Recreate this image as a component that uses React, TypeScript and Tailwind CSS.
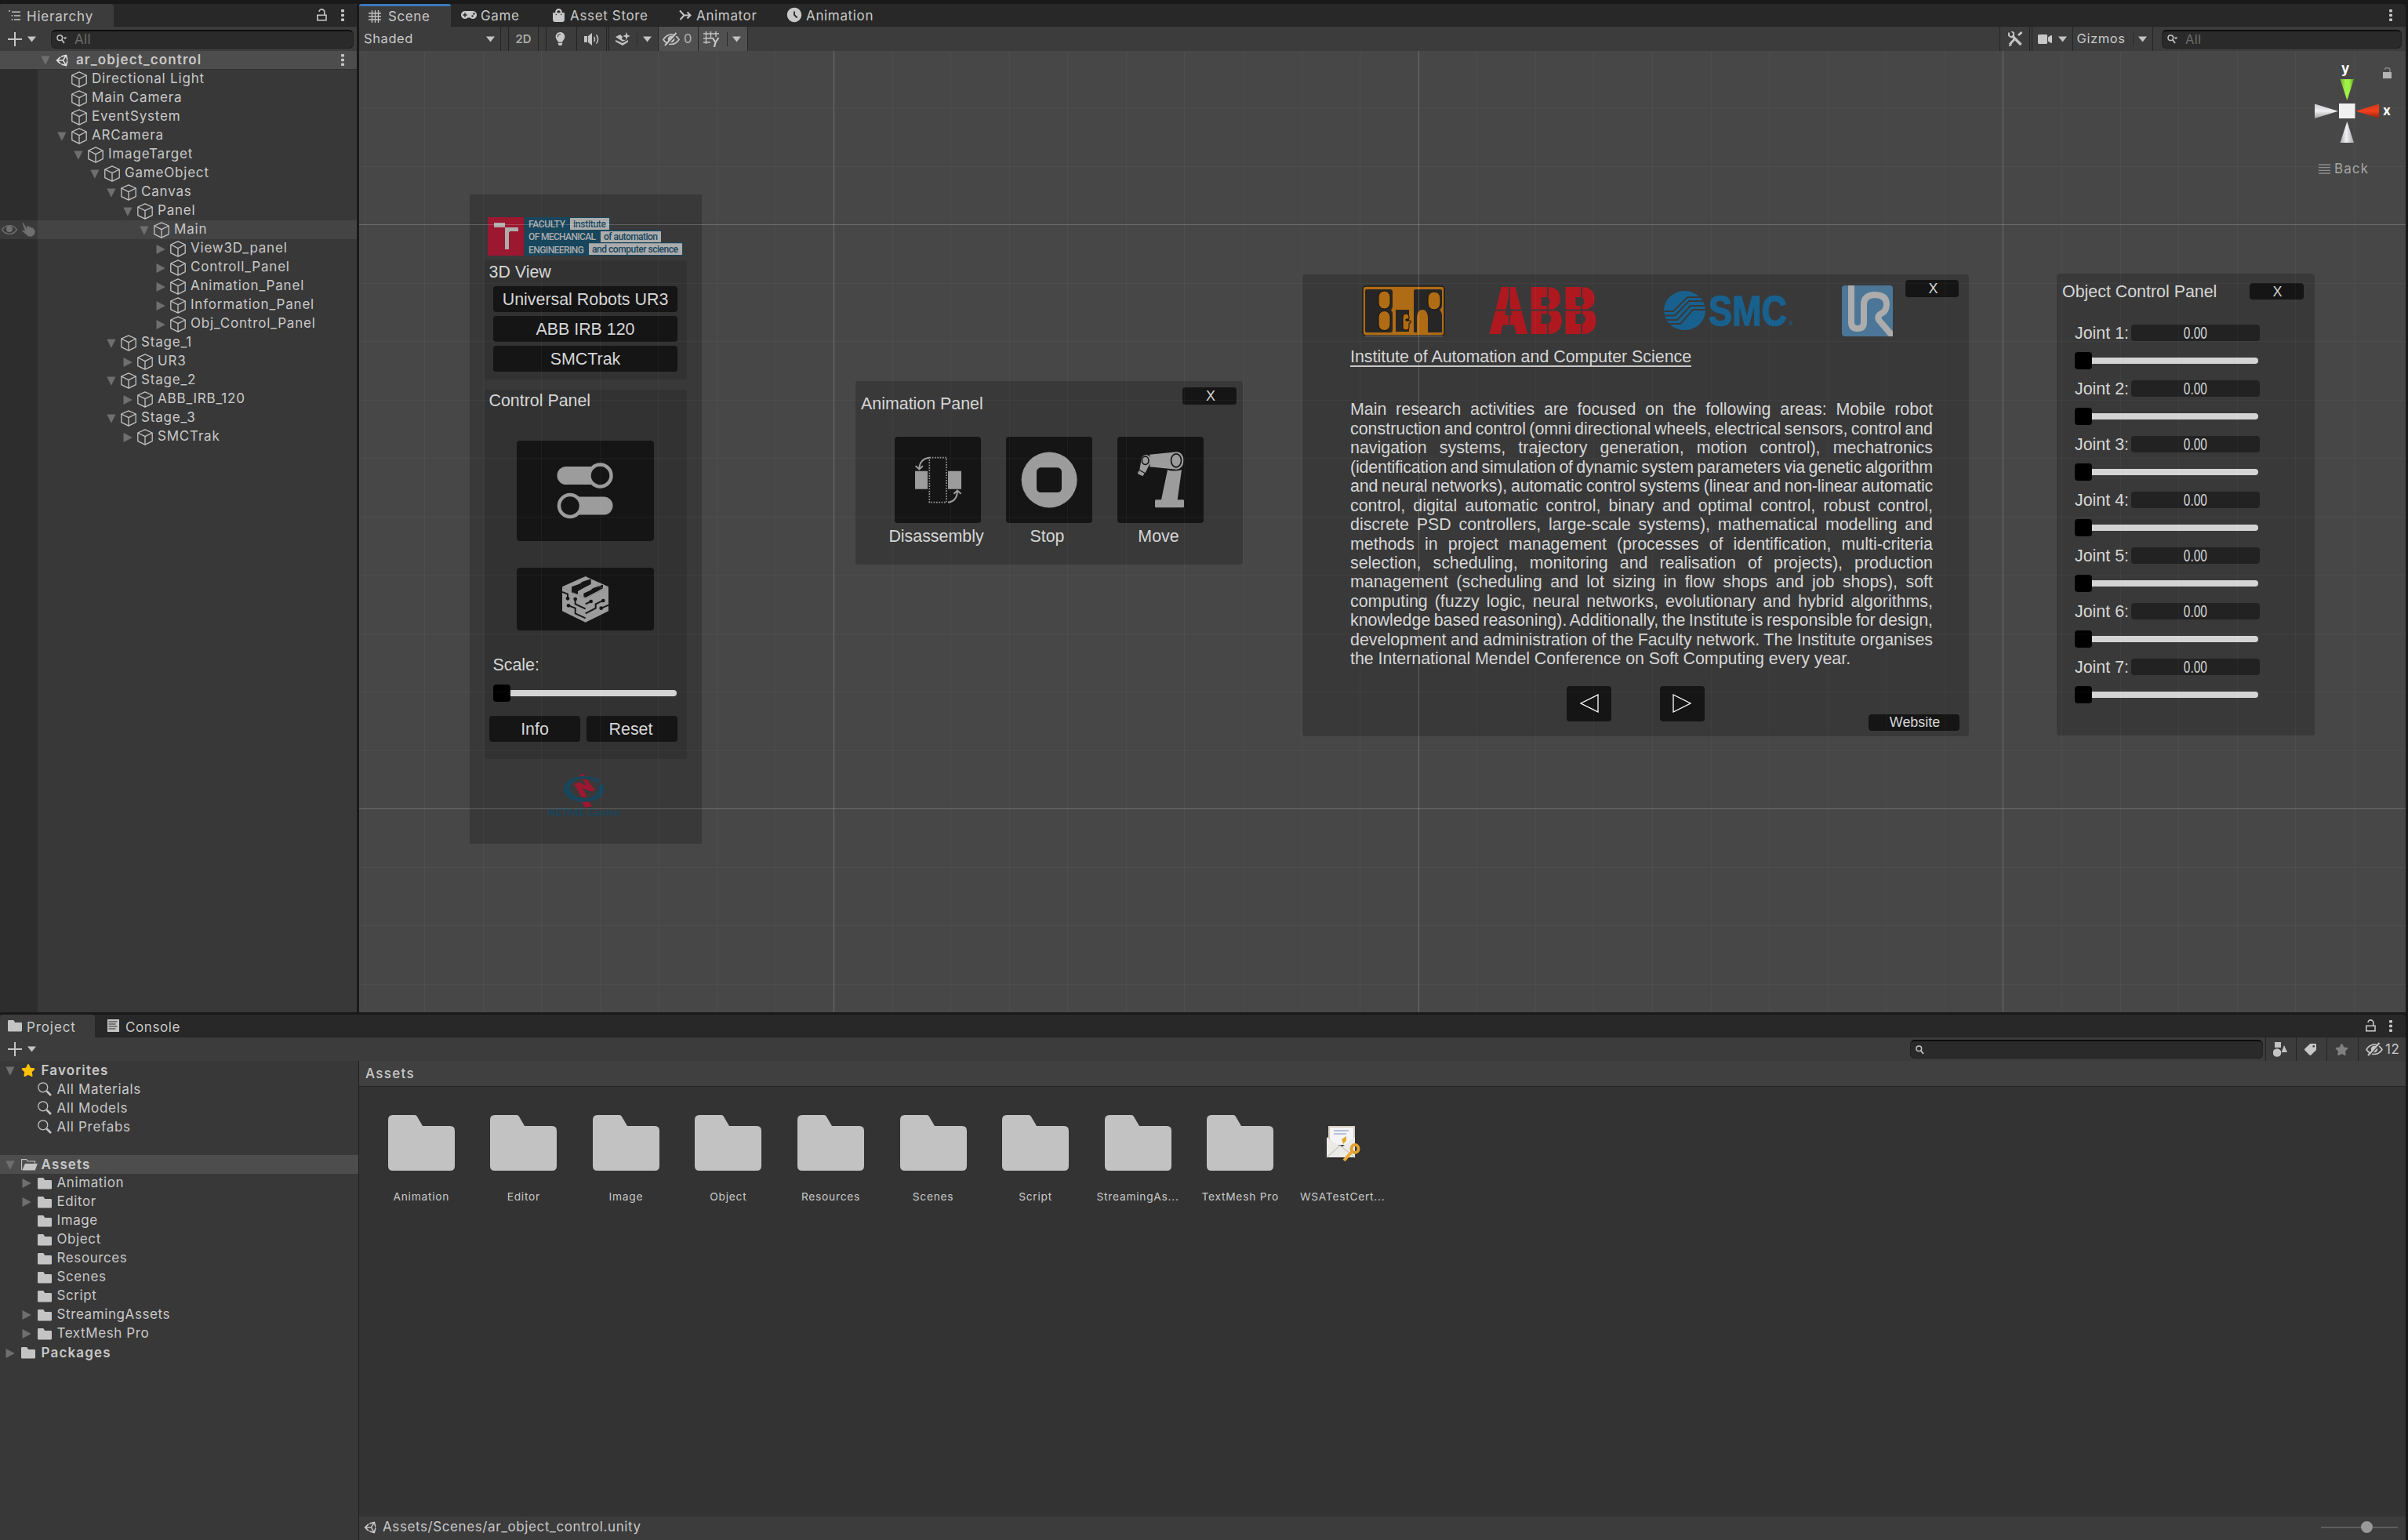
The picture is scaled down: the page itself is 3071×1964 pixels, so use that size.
import React from "react";
import { FaGamepad, FaLightbulb, FaStar, FaTag, FaUnity, FaVideo, FaShoppingBag } from "react-icons/fa";
import { MdAccessTimeFilled } from "react-icons/md";

type P = { className?: string };

const Caret = ({ className = "" }: P) => (
  <svg className={`shrink-0 ${className}`} width="11" height="8" viewBox="0 0 11 8"><path d="M0 0.500h11L5.500 7.500z" fill="#c4c4c4" /></svg>
);
const Fold = ({ open }: { open: boolean }) => (
  <svg className="shrink-0" width="12" height="12" viewBox="0 0 12 12">
    <path d={open ? "M0.3 0.5h11.2L5.9 11.8z" : "M0.5 0v12L11.8 6z"} fill="#6f6f6f" />
  </svg>
);
const Cube = () => (
  <svg className="shrink-0" width="20" height="21" viewBox="0 0 20 21" fill="none" stroke="#c4c4c4" strokeWidth="1.300" strokeLinejoin="round">
    <path d="M10 0.900L19.200 5v10.600L10 20.100 0.800 15.600V5z" />
    <path d="M0.800 5L10 9.600 19.200 5M10 9.600v10.500" />
  </svg>
);
const Folder = () => (
  <svg className="shrink-0" width="18" height="15" viewBox="0 0 18 15"><path d="M1.300 0h6L9.200 3h7.600a1.200 1.200 0 0 1 1.200 1.200v9a1.300 1.300 0 0 1-1.300 1.300H1.300A1.300 1.300 0 0 1 0 13.200V1.300A1.300 1.300 0 0 1 1.300 0z" fill="#c4c4c4" /></svg>
);
const FolderOpen = () => (
  <svg className="shrink-0" width="21" height="15" viewBox="0 0 21 15">
    <path d="M0.600 14V0.600h6L8.500 3h9v2.500" fill="none" stroke="#c4c4c4" strokeWidth="1.100" />
    <path d="M5 6h15.800l-3 8.500H1.200z" fill="#c4c4c4" />
  </svg>
);
const Lens = () => (
  <svg className="shrink-0" width="18" height="18" viewBox="0 0 18 18" fill="none" stroke="#c4c4c4">
    <circle cx="6.800" cy="6.800" r="6" strokeWidth="1.300" /><path d="M11.500 11.500L17 17" strokeWidth="2.600" />
  </svg>
);
const SearchGlyph = ({ menu }: { menu?: boolean }) => (
  <svg className="shrink-0" width="14" height="12" viewBox="0 0 14 12" fill="none" stroke="#c4c4c4">
    <circle cx="4.300" cy="4.300" r="3.300" strokeWidth="1.500" /><path d="M6.700 6.700l3.300 4.300" strokeWidth="1.800" />
    {menu && <path d="M8.500 3.500h5l-2.500 2.700z" fill="#c4c4c4" stroke="none" />}
  </svg>
);
const LockOpen = () => (
  <svg className="shrink-0" width="13" height="16" viewBox="0 0 13 16" fill="none" stroke="#c4c4c4" strokeWidth="1.600">
    <rect x="0.800" y="8.300" width="11.200" height="6.500" /><path d="M3 4a3.300 3.300 0 0 1 6.800 0.500V8" />
  </svg>
);
const Kebab = () => (
  <svg className="shrink-0" width="4" height="15" viewBox="0 0 4 15" fill="#c4c4c4"><rect width="4" height="3.600" rx="1" /><rect y="5.700" width="4" height="3.600" rx="1" /><rect y="11.400" width="4" height="3.600" rx="1" /></svg>
);
const Plus = () => (
  <svg className="shrink-0" width="18" height="18" viewBox="0 0 18 18"><path d="M9 0v18M0 9h18" stroke="#c4c4c4" strokeWidth="2" /></svg>
);
const Tools = () => (
  <svg width="18" height="19" viewBox="0 0 18 19" stroke="#c4c4c4" fill="none">
    <path d="M5 5.500L16.500 17" strokeWidth="3.400" /><path d="M1 1.500v4l3 2 3-1.500V2L4.500 0" strokeWidth="1.900" />
    <path d="M17.500 1L13 5M8.500 9.500L2 16.500" strokeWidth="2.800" /><path d="M1 18l3.500-1" strokeWidth="2" />
  </svg>
);
const HiddenEye = ({ className = "" }: P) => (
  <svg className={`shrink-0 ${className}`} width="22" height="18" viewBox="0 0 22 18" fill="none" stroke="#c4c4c4">
    <path d="M1 9.500C4 4.800 7.500 3.200 11 3.200s7 1.800 10 6.300c-3 4.500-6.500 6-10 6S4 14 1 9.500z" strokeWidth="1.700" />
    <circle cx="11" cy="9" r="4.300" fill="#c4c4c4" stroke="none" />
    <path d="M4.800 17.500L19.300 1.500" stroke="#484848" strokeWidth="1.800" /><path d="M3 17L17.500 1" strokeWidth="2" />
  </svg>
);
const Grid4 = () => (
  <svg width="16" height="16" viewBox="0 0 16 16" stroke="#c4c4c4" strokeWidth="1.300"><path d="M4.500 0v16M8.500 0v16M12.500 0v16M0 4h16M0 8h16M0 12h16" /></svg>
);

const Ui = ({ children, className = "" }: { children: React.ReactNode; className?: string }) => (
  <span className={`whitespace-nowrap leading-none ${className}`}>{children}</span>
);

const SearchBox = ({ className = "", label = "" }: { className?: string; label?: string }) => (
  <div className={`flex h-[24px] shrink-0 items-center rounded-[6px] border border-[#212121] border-t-[#0d0d0d] border-t-2 bg-[#2a2a2a] pl-[6px] ${className}`}>
    <SearchGlyph menu={label !== ""} />
    <Ui className="ml-[9px] tracking-[0.3px] text-[#6c6c6c]">{label}</Ui>
  </div>
);

/* ---------- hierarchy ---------- */
type Node = { d: number; n: string; s?: "open" | "shut"; hl?: boolean };
const nodes: Node[] = [
  { d: 0, n: "Directional Light" }, { d: 0, n: "Main Camera" }, { d: 0, n: "EventSystem" },
  { d: 0, n: "ARCamera", s: "open" }, { d: 1, n: "ImageTarget", s: "open" }, { d: 2, n: "GameObject", s: "open" },
  { d: 3, n: "Canvas", s: "open" }, { d: 4, n: "Panel", s: "open" }, { d: 5, n: "Main", s: "open", hl: true },
  { d: 6, n: "View3D_panel", s: "shut" }, { d: 6, n: "Controll_Panel", s: "shut" }, { d: 6, n: "Animation_Panel", s: "shut" },
  { d: 6, n: "Information_Panel", s: "shut" }, { d: 6, n: "Obj_Control_Panel", s: "shut" },
  { d: 3, n: "Stage_1", s: "open" }, { d: 4, n: "UR3", s: "shut" }, { d: 3, n: "Stage_2", s: "open" },
  { d: 4, n: "ABB_IRB_120", s: "shut" }, { d: 3, n: "Stage_3", s: "open" }, { d: 4, n: "SMCTrak", s: "shut" },
];

function Hierarchy() {
  return (
    <aside className="flex w-[455px] shrink-0 flex-col bg-[#383838]">
      <div className="flex h-[29px] items-stretch rounded-t-[4px] bg-[#282828]">
        <div className="flex w-[145px] items-center rounded-t-[4px] bg-[#3c3c3c] pl-[11px]">
          <svg width="15" height="14" viewBox="0 0 15 14" stroke="#c4c4c4" strokeWidth="1.500"><path d="M0 1h2M4 2.200h11M3.500 7h2M7 7h8M3.500 12h2M7 12h8" /></svg>
          <Ui className="ml-[8px] mt-[3px] tracking-[0.800px]">Hierarchy</Ui>
        </div>
        <div className="flex flex-1 items-center border-b border-[#232323] pl-[259px]">
          <LockOpen /><div className="w-[18px]" /><Kebab />
        </div>
      </div>
      <div className="flex h-[31px] items-center bg-[#3c3c3c] pl-[10px]">
        <Plus /><Caret className="ml-[7px]" /><SearchBox className="ml-[19px] w-[386px]" label="All" />
      </div>
      <div className="flex h-[24px] items-center border-b border-[#303030] bg-[#4d4d4d] pl-[52px]">
        <Fold open /><FaUnity className="ml-[7px] size-[18px] text-[#e0e0e0]" />
        <Ui className="mb-[1px] ml-[8px] flex-1 font-semibold tracking-[1.100px]">ar_object_control</Ui>
        <Kebab /><div className="w-[16px]" />
      </div>
      {nodes.map((r) => (
        <div key={r.n} className={`flex h-[24px] items-stretch ${r.hl ? "bg-[#444444]" : ""}`}>
          <div className={`flex w-[48px] items-center justify-between pl-[2px] pr-[3px] ${r.hl ? "bg-[#3a3a3a]" : "bg-[#2d2d2d]"}`}>
            {r.hl && (
              <>
                <svg width="20" height="12" viewBox="0 0 20 12"><path d="M0.500 6C3 2.500 6 0.700 10 0.700S17 2.500 19.500 6C17 9.500 14 11.300 10 11.300S3 9.500 0.500 6z" fill="none" stroke="#6f6f6f" strokeWidth="1.300" /><circle cx="10" cy="5" r="4" fill="#6f6f6f" /></svg>
                <svg width="17" height="18" viewBox="0 0 17 18" fill="#6f6f6f"><path d="M0.500 0.500C2 0 2.500 1 3.200 2.500L6 8V4.500L8 4l1 1.500L11 5l1 1.800 2-0.300 1 2 1.500 1V14L13 17.500H8L3 13 0 10.500 1.500 9.500 4 10.500z" /></svg>
              </>
            )}
          </div>
          <div className="flex items-center" style={{ paddingLeft: 25 + 21 * r.d }}>
            <div className="flex w-[18px] items-center pt-[1px]">{r.s && <Fold open={r.s === "open"} />}</div>
            <Cube />
            <Ui className="mb-[1px] ml-[6px] tracking-[0.800px]">{r.n}</Ui>
          </div>
        </div>
      ))}
      <div className="w-[48px] flex-1 bg-[#2d2d2d]" />
    </aside>
  );
}

/* ---------- scene canvas ---------- */
const T = ({ children, className = "" }: { children: React.ReactNode; className?: string }) => (
  <span className={`translate-y-px whitespace-nowrap leading-none ${className}`}>{children}</span>
);
const Btn = ({ children, className = "" }: { children?: React.ReactNode; className?: string }) => (
  <div className={`flex shrink-0 items-center justify-center rounded-[4px] bg-[#151515] ${className}`}>{children}</div>
);
const Slider = ({ className = "" }: P) => (
  <div className={`flex w-[234px] shrink-0 items-center ${className}`}>
    <div className="size-[22px] rounded-[4px] bg-black" />
    <div className="h-[8px] flex-1 rounded-r-full bg-[#d4d4d4]" />
  </div>
);

function MainPanel() {
  return (
    <div className="absolute left-[141px] top-[183px] flex h-[828px] w-[296px] flex-col items-start bg-[#393939] pl-[19px]">
      <div className="ml-[4px] mt-[29px] flex h-[49px] gap-[1px]">
        <svg width="46" height="49" viewBox="0 0 46 49"><rect width="46" height="49" fill="#9c1730" /><path d="M8 7h14v6H8zM22 13h17v5H29q-2 0-2 3v20h-5z" fill="#acacac" /></svg>
        <svg width="202" height="49" viewBox="0 0 202 49" fontFamily="Roboto, sans-serif" fontWeight="500" fontSize="12">
          <path d="M0 0h109v16h65v16h28v17H0z" fill="#18465c" />
          <path d="M58 1h50v15H58zM97 18h77v14H97zM82 33.300h119v14.700H82z" fill="#acacac" />
          <g fill="#acacac"><text x="5" y="12.500" textLength="47">FACULTY</text><text x="5" y="29" textLength="86">OF MECHANICAL</text><text x="5" y="45.500" textLength="71">ENGINEERING</text></g>
          <g fill="#18465c"><text x="62" y="12.500" textLength="42">institute</text><text x="101" y="28.500" textLength="69">of automation</text><text x="86" y="44.500" textLength="110">and computer science</text></g>
        </svg>
      </div>
      <div className="mt-[6px] flex h-[152px] w-[258px] flex-col rounded-[4px] bg-[#323232]">
        <T className="ml-[5.500px] mt-[4px]">3D View</T>
        <div className="ml-[11px] mt-[8px] flex flex-col gap-[5px]">
          {["Universal Robots UR3", "ABB IRB 120", "SMCTrak"].map((t) => <Btn key={t} className="h-[33px] w-[235px]"><T>{t}</T></Btn>)}
        </div>
      </div>
      <div className="mt-[13px] flex h-[471px] w-[258px] flex-col rounded-[4px] bg-[#323232]">
        <T className="ml-[5.500px] mt-[3px]">Control Panel</T>
        <Btn className="ml-[41px] mt-[41px] h-[128px] w-[175px]">
          <svg className="-ml-px" width="72" height="72" viewBox="0 0 72 72">
            <rect x="0.500" y="5" width="60" height="23" rx="11.500" fill="#9c9c9c" /><rect x="11" y="43.500" width="60.500" height="23" rx="11.500" fill="#9c9c9c" />
            <circle cx="55.500" cy="16.500" r="14" fill="#151515" stroke="#9c9c9c" strokeWidth="4.500" /><circle cx="17" cy="55" r="14" fill="#151515" stroke="#9c9c9c" strokeWidth="4.500" />
          </svg>
        </Btn>
        <Btn className="ml-[41px] mt-[34px] h-[80px] w-[175px]">
          <svg className="mt-[1px]" width="59" height="59" viewBox="0 0 177 177">
            <path d="M89 0L177 40V133L89 176 0 133V40z" fill="#9c9c9c" />
            <path d="M36 40L66 29 78 20 110 10V30L82 44 60 57V69L36 62zM82 65L107 54 118 45 156 32V46L89 81 82 78z" fill="#151515" />
            <g fill="none" stroke="#151515" strokeWidth="6"><path d="M0 60L21 68V82M50 88V106L89 124M25 112L50 122V142L89 160M89 106L110 96M89 142L128 122V106L156 93M150 122L177 110" /></g>
            <g fill="#151515"><circle cx="21" cy="85" r="7" /><circle cx="50" cy="87" r="7" /><circle cx="24" cy="112" r="7" /><circle cx="110" cy="96" r="7" /><circle cx="157" cy="93" r="7" /><circle cx="149" cy="122" r="7" /></g>
            <path d="M0 42L89 84 177 42M132 25l2 12 22 8" fill="none" stroke="#7c7c7c" strokeWidth="1.500" />
          </svg>
        </Btn>
        <T className="ml-[10.500px] mt-[33px]">Scale:</T>
        <Slider className="ml-[11px] mt-[14px]" />
        <div className="ml-[6px] mt-[18px] flex gap-[8px]"><Btn className="h-[33px] w-[116px]"><T>Info</T></Btn><Btn className="h-[33px] w-[116px]"><T className="-ml-[3px]">Reset</T></Btn></div>
      </div>
      <svg className="ml-[80px] mt-[19px] overflow-visible" width="93" height="56" viewBox="0 0 279 168">
        <path d="M122 9L132 0 141 2 145 11zM132 106H162L171 124 144 128z" fill="#9c1730" />
        <path fillRule="evenodd" d="M140 9c44 0 60 12 60 20l-12 6c-8-12-26-18-46-18-32 0-56 16-56 38s24 38 56 38 54-16 54-34l0-14 16-6c4 6 6 12 6 19 0 28-34 49-78 49S63 86 63 58 96 9 140 9z" fill="#18465c" />
        <path d="M102 38L124 32 152 46 134 22H152L184 62 164 67 134 54 154 89 130 88z" fill="#9c1730" />
        <text x="0" y="161" textLength="278" lengthAdjust="spacingAndGlyphs" fontFamily="Lato, sans-serif" fontWeight="700" fontSize="38" fill="#18465c">NETME Centre</text>
      </svg>
    </div>
  );
}

const animIcons = [
  {
    t: "Disassembly", w: "-ml-[4px]", svg: (
      <svg width="110" height="110" viewBox="0 0 330 330" fill="none" stroke="#9c9c9c">
        <path d="M78 131h48v69H78zM204 131h51v69h-51z" fill="#9c9c9c" stroke="none" />
        <path d="M133 80h65v171h-65z" strokeWidth="5" strokeDasharray="5 5" />
        <path d="M133 80Q96 84 94 122M80 112l14 12 14-12M204 251Q238 247 240 208M226 218l14-12 14 12" strokeWidth="6" />
      </svg>),
  },
  { t: "Stop", w: "-ml-[5px]", svg: <svg width="110" height="110" viewBox="0 0 330 330"><circle cx="165.500" cy="165" r="106.500" fill="#9c9c9c" /><rect x="117" y="118" width="96" height="95" rx="16" fill="#151515" /></svg> },
  {
    t: "Move", w: "-ml-[5px]", svg: (
      <svg width="110" height="110" viewBox="0 0 330 330" fill="#9c9c9c">
        <path d="M192 127Q215 134 246 127L230 241h21q4 0 4 4v22q0 4-4 4H148q-4 0-4-4v-22q0-4 4-4h20z" />
        <path d="M123 68L228 58q25 2 25 33 0 32-27 34L123 115q10-24 0-47zM92 85q5-16 20-16 17 4 17 22 0 12-9 20l-13 27-22-12zM83 129l21 11-7 11-20-10z" />
        <ellipse cx="225" cy="91" rx="19.500" ry="25.500" stroke="#151515" strokeWidth="5" /><ellipse cx="107" cy="91" rx="13" ry="15.500" stroke="#151515" strokeWidth="5" />
      </svg>),
  },
];

function AnimationPanel() {
  return (
    <div className="absolute left-[633px] top-[421px] h-[234px] w-[494px] rounded-[4px] bg-[#393939]">
      <div className="flex h-[30px] items-end justify-between pl-[7px] pr-[8px]">
        <T className="-mb-[9px]">Animation Panel</T>
        <Btn className="h-[22px] w-[69px]"><T className="ml-[3px] text-[17.900px]">X</T></Btn>
      </div>
      <div className="ml-[50px] mt-[41px] flex gap-[32px]">
        {animIcons.map((a) => (
          <div key={a.t} className="flex w-[110px] flex-col items-center">
            <Btn className="size-[110px]">{a.svg}</Btn>
            <T className={`mt-[6px] ${a.w}`}>{a.t}</T>
          </div>
        ))}
      </div>
    </div>
  );
}

const body = [
  "Main research activities are focused on the following areas: Mobile robot",
  "construction and control (omni directional wheels, electrical sensors, control and",
  "navigation systems, trajectory generation, motion control), mechatronics",
  "(identification and simulation of dynamic system parameters via genetic algorithm",
  "and neural networks), automatic control systems (linear and non-linear automatic",
  "control, digital automatic control, binary and optimal control, robust control,",
  "discrete PSD controllers, large-scale systems), mathematical modelling and",
  "methods in project management (processes of identification, multi-criteria",
  "selection, scheduling, monitoring and realisation of projects), production",
  "management (scheduling and lot sizing in flow shops and job shops), soft",
  "computing (fuzzy logic, neural networks, evolutionary and hybrid algorithms,",
  "knowledge based reasoning). Additionally, the Institute is responsible for design,",
  "development and administration of the Faculty network. The Institute organises",
  "the International Mendel Conference on Soft Computing every year.",
];
const lineFit = (i: number) => {
  if (i === 13) return "[word-spacing:-0.200px]";
  if (i === 3 || i === 4) return "[text-align-last:justify] tracking-[-0.180px] [word-spacing:-2.500px]";
  return "[text-align-last:justify] [word-spacing:-3.200px]";
};

function InfoPanel() {
  return (
    <div className="absolute left-[1203px] top-[285px] flex h-[589px] w-[850px] flex-col rounded-[4px] bg-[#393939]">
      <div className="flex h-[79px] items-start pl-[76px] pt-[14px]">
        <svg width="106" height="65" viewBox="0 0 106 65">
          <rect x="1" y="1" width="104" height="63" rx="4" fill="#b06c14" stroke="#1b1b1b" strokeWidth="1.500" />
          <g fill="#262626"><path d="M6 5h30q3 0 3 3v18q0 4-2 5.500 2 1.500 2 5.500v20q0 3-3 3H6q-2 0-2-2V7q0-2 2-2z" /><path d="M43 31h17v28H43z" /><path d="M68 5h32q2 0 2 2v18q0 4-3 6 3 3 3 8v21H84V40q-1-9-7-9-6 0-7 9v20h-4V7q0-2 2-2z" /></g>
          <g fill="#b06c14" stroke="#111" strokeWidth="1"><rect x="21" y="7" width="15" height="23" rx="7.500" /><rect x="21" y="32.500" width="15" height="25" rx="7.500" /><rect x="84" y="8" width="16" height="23" rx="8" /><path d="M52 40q0-4 4-4t4 4v3h-4v2h6v3h-2v6q0 3-4 3t-4-3z" /></g>
          <path d="M4 64.500h99" stroke="#8a8a8a" strokeWidth="0.800" />
        </svg>
        <svg className="ml-[55px] mt-px overflow-visible" width="139" height="62" viewBox="0 0 139 62">
          <text x="0" y="61" textLength="139" lengthAdjust="spacingAndGlyphs" fontFamily="Inter, sans-serif" fontWeight="900" fontSize="83" fill="#b0181f">ABB</text>
          <path d="M0 30.500h140M27 0v48M76 0v62M119 0v62" stroke="#393939" strokeWidth="2" />
        </svg>
        <svg className="ml-[85px] mt-[6px] overflow-visible" width="166" height="54" viewBox="0 0 166 54">
          <ellipse cx="26.500" cy="26" rx="26.500" ry="25" fill="#18618f" />
          <g fill="none" stroke="#393939" strokeWidth="2"><path d="M0 27h12L30 9h19M0 32.500h14L32 14h20M2 38h15L34 20h19M6 43h15L37 25h16" /></g>
          <text x="57" y="44.500" textLength="100" lengthAdjust="spacingAndGlyphs" fontFamily="Liberation Sans, sans-serif" fontWeight="700" fontSize="54" fill="#18618f" stroke="#18618f" strokeWidth="1.500">SMC</text>
          <text x="159" y="45" fontFamily="Liberation Sans, sans-serif" fontSize="8" fill="#18618f">®</text>
        </svg>
        <svg className="ml-[61px]" width="65" height="65" viewBox="0 0 65 65">
          <rect width="65" height="65" rx="4" fill="#4b7697" />
          <path d="M12 0V47q0 8 8 8t8-8V24q0-11 13-12 16 0 16 12 0 9-7 12-5 3-3 8L65 65" fill="none" stroke="#acacac" strokeWidth="8" />
        </svg>
        <Btn className="-mt-[7px] ml-[16px] h-[22px] w-[68px]"><T className="ml-[3px] text-[17.900px]">X</T></Btn>
      </div>
      <div className="ml-[61px] mt-[16px] flex"><Ui className="border-b-2 border-[#c8c8c8]">Institute of Automation and Computer Science</Ui></div>
      <div className="ml-[61px] mt-[42px] flex w-[743px] flex-col">
        {body.map((l, i) => (
          <div key={l} className={`h-[24.460px] whitespace-nowrap leading-[24.460px] ${lineFit(i)}`}>{l}</div>
        ))}
      </div>
      <div className="flex pl-[337px] pt-[22px]">
        <Btn className="h-[45px] w-[57px]"><svg width="24" height="24" viewBox="0 0 24 24"><path d="M23 1v22L1 12z" fill="none" stroke="#fff" strokeWidth="1.300" /></svg></Btn>
        <Btn className="ml-[62px] h-[45px] w-[57px]"><svg className="-ml-[2px]" width="24" height="24" viewBox="0 0 24 24"><path d="M1 1v22L23 12z" fill="none" stroke="#fff" strokeWidth="1.300" /></svg></Btn>
        <Btn className="ml-[209px] mt-[36px] h-[21px] w-[116px]"><T className="ml-[2px] text-[17.900px]">Website</T></Btn>
      </div>
    </div>
  );
}

function ObjectPanel() {
  return (
    <div className="absolute left-[2165px] top-[284px] h-[589px] w-[329px] rounded-[4px] bg-[#393939]">
      <div className="flex items-center pl-[7px] pt-[12px]">
        <T className="w-[239px]">Object Control Panel</T>
        <Btn className="h-[21px] w-[69px]"><T className="ml-[2px] text-[17.900px]">X</T></Btn>
      </div>
      <div className="mt-[32px] flex flex-col pl-[23px]">
        {[1, 2, 3, 4, 5, 6, 7].map((j) => (
          <div key={j} className="h-[71px]">
            <div className="flex h-[21px] items-center">
              <T className="w-[72px]">{`Joint ${j}:`}</T>
              <div className="flex h-[21px] w-[164px] items-center justify-center rounded-[4px] bg-[#222222]"><T className="scale-x-[0.720]">0.00</T></div>
            </div>
            <Slider className="mt-[14px]" />
          </div>
        ))}
      </div>
    </div>
  );
}

function GridLines() {
  const v = Array.from({ length: 36 }, (_, k) => ({ p: Math.floor(1063.500 - 458 + 74.570 * (k - 8)), major: (k - 8) % 10 === 0 }));
  const h = Array.from({ length: 17 }, (_, k) => ({ p: Math.round(286 - 65 + 74.500 * (k - 2)), major: (k - 2) % 10 === 0 }));
  return (
    <svg className="pointer-events-none absolute inset-0" width="2610" height="1226" shapeRendering="crispEdges">
      {v.map((l) => <rect key={l.p} x={l.p} y="0" width="1" height="1226" fill="#fff" fillOpacity={l.major ? 0.2 : 0.035} />)}
      {h.map((l) => <rect key={l.p} x="0" y={l.p} width="2610" height="1" fill="#fff" fillOpacity={l.major ? 0.2 : 0.035} />)}
    </svg>
  );
}

function SceneGizmo() {
  return (
    <>
      <svg className="absolute left-[2490px] top-[10px]" width="112" height="112" viewBox="0 0 112 112">
        <defs>
          <linearGradient id="g" x1="0" x2="1"><stop offset="0" stopColor="#6fae2c" /><stop offset=".4" stopColor="#a4f24a" /><stop offset=".7" stopColor="#9aee44" /><stop offset="1" stopColor="#5b9425" /></linearGradient>
          <linearGradient id="w" x1="0" x2="1"><stop offset="0" stopColor="#a9a9ae" /><stop offset=".45" stopColor="#f0f0f2" /><stop offset="1" stopColor="#a6a6aa" /></linearGradient>
          <linearGradient id="s" x1="0" y1="0" x2="0" y2="1"><stop offset="0" stopColor="#c9c9d0" /><stop offset=".5" stopColor="#efeff1" /><stop offset="1" stopColor="#a0a0a0" /></linearGradient>
          <linearGradient id="r" x1="0" y1="0" x2="0" y2="1"><stop offset="0" stopColor="#d03a1a" /><stop offset=".5" stopColor="#f4401d" /><stop offset="1" stopColor="#8e2410" /></linearGradient>
        </defs>
        <path d="M36.500 26h17.500L45.300 53z" fill="url(#g)" /><path d="M45.300 80L54 107H36.500z" fill="url(#w)" />
        <path d="M4 57.500L34 66.700 4 76z" fill="url(#s)" /><path d="M86 57.500L56.500 66.700 86 76z" fill="url(#r)" />
        <rect x="35" y="57" width="20.500" height="19" fill="#f0f0f0" />
        <g fontFamily="Inter, sans-serif" fontWeight="700" fontSize="17" fill="#fff"><text x="38" y="18">y</text><text x="91" y="72">x</text></g>
        <path d="M91 17h11v8H91z" fill="#b4b4b4" /><path d="M93 13.500q1-2 3.500-2 3.500 0 3.500 3V17" fill="none" stroke="#8a8a8a" strokeWidth="1.500" />
      </svg>
      <div className="absolute left-[2499px] top-[142px] flex items-center gap-[5px] text-[#a6a6a6]">
        <svg width="15" height="13" viewBox="0 0 15 13" stroke="#8e8e8e" strokeWidth="1.300"><path d="M0 1h15M0 4.700h15M0 8.300h15M0 12h15" /></svg>
        <Ui className="font-[Inter] text-[17px] tracking-[1.100px]">Back</Ui>
      </div>
    </>
  );
}

const Tab = ({ w, iw, icon, t }: { w: string; iw: string; icon: React.ReactNode; t: string }) => (
  <div className={`flex items-center pl-[13px] ${w}`}><div className={iw}>{icon}</div><Ui className="mt-[3px] tracking-[0.650px]">{t}</Ui></div>
);
const V = () => <div className="w-px shrink-0 bg-[#242424]" />;
const ThinV = () => <div className="h-[18px] w-px shrink-0 self-center bg-[#2c2c2c]" />;

function Scene() {
  return (
    <section className="flex w-[2610px] shrink-0 flex-col">
      <div className="flex h-[29px] items-stretch rounded-tr-[4px] border-b border-[#232323] bg-[#282828]">
        <div className="-mb-px flex w-[117px] items-center rounded-t-[3px] border-t-[3px] border-[#3a79bb] bg-[#3c3c3c] pb-[1px] pl-[12px]">
          <div className="w-[25px]"><Grid4 /></div><Ui className="mt-px">Scene</Ui>
        </div>
        <Tab w="w-[116px]" iw="w-[25px]" icon={<FaGamepad className="size-[20px]" />} t="Game" />
        <Tab w="w-[162px]" iw="w-[23px]" icon={<FaShoppingBag className="size-[17px]" />} t="Asset Store" />
        <Tab w="w-[138px]" iw="w-[22px]" icon={<svg width="16" height="15" viewBox="0 0 16 15" fill="none" stroke="#c4c4c4" strokeWidth="2"><path d="M1 1.500L6.500 7.500H14M1.500 13L6.500 7.500M10.500 3.500L14.500 7.500l-4 4" /></svg>} t="Animator" />
        <Tab w="w-[140px]" iw="w-[24px]" icon={<MdAccessTimeFilled className="-ml-[2px] size-[22px]" />} t="Animation" />
        <div className="flex flex-1 items-center justify-end pr-[17px]"><Kebab /></div>
      </div>
      <div className="flex h-[31px] items-stretch bg-[#3c3c3c] text-[16.500px]">
        <div className="flex w-[180px] items-center justify-between pl-[6px] pr-[7px]"><Ui>Shaded</Ui><Caret /></div>
        <V /><div className="w-[9px]" /><V />
        <div className="flex w-[37px] items-center justify-center"><Ui className="text-[15px] font-semibold tracking-normal text-[#a8a8a8]">2D</Ui></div>
        <V /><div className="w-[9px]" /><V />
        <div className="flex w-[38px] items-center justify-center pr-[3px]"><FaLightbulb className="size-[17px]" /></div><V />
        <div className="flex w-[37px] items-center justify-center">
          <svg width="19" height="16" viewBox="0 0 19 16" fill="none" stroke="#c4c4c4"><path d="M0 4h4v8H0zM5 4l5-4v16l-5-4z" fill="#c4c4c4" stroke="none" /><path d="M12.500 5q2 3 0 6M15.500 2.500q4 5.500 0 11" strokeWidth="1.500" /></svg>
        </div><V /><div className="w-[2px]" /><V />
        <div className="flex w-[35px] items-center justify-center">
          <svg width="19" height="17" viewBox="0 0 19 17" fill="#c4c4c4"><path d="M14 0l1.300 3.700L19 5l-3.700 1.300L14 10l-1.300-3.700L9 5l3.700-1.300zM0 6l6-3 3 3-1 3 3 1 3-0.500L9 12z" /><path d="M0 10v2l9 5 7-4.500V10l-7 4z" /></svg>
        </div><ThinV />
        <div className="flex w-[26px] items-center justify-center pr-[2px]"><Caret /></div><V />
        <div className="flex w-[50px] items-center bg-[#505050] pl-[5px]"><HiddenEye /><Ui className="ml-[5px] text-[#b4b4b4]">0</Ui></div><V />
        <div className="flex w-[36px] items-center bg-[#505050] pl-[6px]">
          <svg width="21" height="20" viewBox="0 0 21 20" fill="none" stroke="#c4c4c4" strokeWidth="1.400"><path d="M3.500 0v16M9.500 0v9M16 0v7M0 3h20M0 9h11M0 14h9" /><path d="M11.500 8l4 6 4-6M15.500 14l-1.500 6" strokeWidth="2.200" /></svg>
        </div>
        <div className="flex bg-[#505050]"><ThinV /></div>
        <div className="flex w-[25px] items-center justify-center bg-[#505050] pr-[2px]"><Caret /></div><V />
        <div className="flex-1" />
        <V /><div className="flex w-[37px] items-center justify-center"><Tools /></div><V /><div className="w-[2px]" /><V />
        <div className="flex w-[51px] items-center pl-[7px]"><FaVideo className="size-[18px]" /><Caret className="ml-[8px]" /></div><V />
        <div className="flex w-[76px] items-center pl-[4.500px]"><Ui className="tracking-[0.600px]">Gizmos</Ui></div><ThinV />
        <div className="flex w-[24px] items-center justify-center pr-[2px]"><Caret /></div><V />
        <SearchBox className="ml-[11px] mr-[5px] w-[306px] self-center" label="All" />
      </div>
      <div className="relative flex-1 overflow-hidden bg-[#474747] font-['Liberation_Sans'] text-[21.400px] tracking-normal text-[#d6d6d6]">
        <MainPanel /><AnimationPanel /><InfoPanel /><ObjectPanel />
        <GridLines />
        <SceneGizmo />
      </div>
    </section>
  );
}

/* ---------- project ---------- */
const assets: [string, boolean][] = [["Animation", true], ["Editor", true], ["Image", false], ["Object", false], ["Resources", false], ["Scenes", false], ["Script", false], ["StreamingAssets", true], ["TextMesh Pro", true]];
const tiles = ["Animation", "Editor", "Image", "Object", "Resources", "Scenes", "Script", "StreamingAs...", "TextMesh Pro"];

const Top = ({ icon, t, open, sel }: { icon: React.ReactNode; t: string; open: boolean; sel?: boolean }) => (
  <div className={`flex h-[24px] items-center pl-[7px] ${sel ? "bg-[#4d4d4d]" : ""}`}>
    <div className="w-[20px] pt-[1px]"><Fold open={open} /></div><div className="w-[25.500px]">{icon}</div><Ui className="font-semibold tracking-[1.150px]">{t}</Ui>
  </div>
);

function Project() {
  return (
    <section className="flex flex-1 flex-col">
      <div className="flex h-[29px] w-[3068px] items-stretch rounded-tr-[4px] bg-[#282828]">
        <div className="flex w-[121px] items-center rounded-t-[4px] bg-[#3c3c3c] pl-[10px]"><Folder /><Ui className="ml-[6px] mt-[4px] tracking-[0.900px]">Project</Ui></div>
        <div className="flex flex-1 items-center border-b border-[#232323] pl-[16px]">
          <svg width="15" height="16" viewBox="0 0 15 16"><path d="M0 0h15v16H0z" fill="#c4c4c4" /><path d="M1.500 3h11M1.500 6h9M1.500 9h11M1.500 12h9" stroke="#282828" strokeWidth="1.200" /></svg>
          <Ui className="ml-[8px] mt-[4px] flex-1">Console</Ui>
          <LockOpen /><div className="w-[17px]" /><Kebab /><div className="w-[17px]" />
        </div>
      </div>
      <div className="flex h-[30px] w-[3068px] items-stretch bg-[#3c3c3c]">
        <div className="flex flex-1 items-center pl-[10px]"><Plus /><Caret className="ml-[7px]" /></div>
        <SearchBox className="mr-[3px] w-[450px] self-center" />
        <V /><div className="flex w-[38px] items-center justify-center pr-[2px]"><svg width="18" height="19" viewBox="0 0 18 19" fill="#c4c4c4"><path d="M2 0h8v7H2zM11 12l3-8 4 9h-7z" /><circle cx="5" cy="13.500" r="5.300" /></svg></div>
        <V /><div className="flex w-[38px] items-center justify-center pr-[4px]"><FaTag className="size-[15px] -scale-x-100" /></div>
        <V /><div className="flex w-[39px] items-center justify-center pr-[3px]"><FaStar className="size-[17px] text-[#808080]" /></div>
        <V /><div className="flex w-[60px] items-center pl-[9px]"><HiddenEye /><Ui className="ml-[3px]">12</Ui></div>
      </div>
      <div className="flex flex-1">
        <div className="w-[457px] shrink-0 bg-[#383838]">
          <Top open t="Favorites" icon={<FaStar className="size-[18px] text-[#ffc107]" />} />
          {["All Materials", "All Models", "All Prefabs"].map((t) => (
            <div key={t} className="flex h-[24px] items-center pl-[48px]"><Lens /><Ui className="ml-[6.500px] tracking-[0.700px]">{t}</Ui></div>
          ))}
          <div className="h-[24px]" />
          <Top open sel t="Assets" icon={<FolderOpen />} />
          {assets.map(([t, f]) => (
            <div key={t} className="flex h-[24px] items-center pl-[28px]"><div className="w-[20px]">{f && <Fold open={false} />}</div><Folder /><Ui className="mb-[2px] ml-[6.500px]">{t}</Ui></div>
          ))}
          <Top open={false} t="Packages" icon={<Folder />} />
        </div>
        <div className="w-px bg-[#1f1f1f]" />
        <div className="flex w-[2610px] shrink-0 flex-col bg-[#333333]">
          <div className="flex h-[33px] items-center border-b border-[#232323] bg-[#404040] pl-[8px]"><Ui className="mt-px font-medium tracking-[1.300px]">Assets</Ui></div>
          <div className="flex flex-1 items-start pl-[14px] pt-[36px]">
            {tiles.map((t) => (
              <div key={t} className="flex w-[130.550px] flex-col items-center">
                <svg width="85" height="71" viewBox="0 0 85 71"><path d="M6 0h28q2 0 3 2l7 12h35q6 0 6 6v45q0 6-6 6H6q-6 0-6-6V6q0-6 6-6z" fill="#c2c2c2" /></svg>
                <Ui className="mt-[27px] text-[13.750px] tracking-[0.750px]">{t}</Ui>
              </div>
            ))}
            <div className="flex w-[130.550px] flex-col items-center">
              <svg className="ml-[4px] mt-[12px]" width="48" height="48" viewBox="0 0 48 48">
                <path d="M4 2h34v16H4z" fill="#d8cfc0" /><path d="M6 4h30v22H6z" fill="#f4f4f6" /><path d="M11 8h19M11 12h16" stroke="#b9bfd8" strokeWidth="2" />
                <path d="M2 16l19 13 17-13v26H2z" fill="#eceae6" /><path d="M2 42l17-15 19 15" fill="none" stroke="#cfcbc4" strokeWidth="1.500" /><path d="M21 19l6-4v6l-4 4z" fill="#e0aa2c" />
                <path d="M3 43.500h33" stroke="#222" strokeWidth="2" opacity="0.500" />
                <ellipse cx="38" cy="31" rx="4.500" ry="5" fill="none" stroke="#e0a030" strokeWidth="4" /><path d="M34 35L24 46" stroke="#e8ab3c" strokeWidth="4" />
              </svg>
              <Ui className="mt-[38px] text-[13.750px] tracking-[0.750px]">WSATestCert...</Ui>
            </div>
          </div>
          <div className="flex h-[30px] items-center bg-[#3c3c3c] pb-[3px] pl-[6px] pr-[10px]">
            <FaUnity className="size-[18px]" /><Ui className="ml-[6px] flex-1">Assets/Scenes/ar_object_control.unity</Ui>
            <div className="flex w-[98px] items-center"><div className="h-[2px] w-[51px] bg-[#5e5e5e]" /><div className="size-[15px] rounded-full bg-[#999999]" /><div className="h-[2px] flex-1 bg-[#5e5e5e]" /></div>
          </div>
        </div>
      </div>
    </section>
  );
}

export default function App() {
  return (
    <div className="flex h-[1964px] w-[3071px] flex-col overflow-hidden bg-[#191919] pt-[5px] font-[Inter] text-[17px] tracking-[0.600px] text-[#c8c8c8]">
      <div className="flex h-[1286px] shrink-0 gap-[3px]"><Hierarchy /><Scene /></div>
      <div className="h-[3px] shrink-0" />
      <Project />
    </div>
  );
}
